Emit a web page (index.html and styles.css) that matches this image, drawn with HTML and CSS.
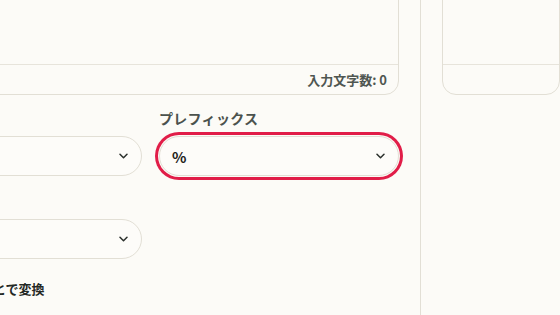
FILE: index.html
```html
<!DOCTYPE html>
<html lang="ja">
<head>
  <meta charset="UTF-8" />
  <meta name="viewport" content="width=device-width, initial-scale=1.0" />
  <title>文字変換</title>
  <link rel="stylesheet" href="styles.css">
</head>
<body>
  <div class="layout">
    <main class="main">
      <div class="text-card">
        <div class="text-area"></div>
        <div class="text-footer">入力文字数: 0</div>
      </div>

      <div class="options">
        <div class="field">
          <label class="field-label"></label>
          <div class="select">
            <span class="select-value"></span>
            <svg class="chevron" width="9" height="6" viewBox="0 0 9 6"><path d="M1 1.2l3.5 3.5 3.5-3.5" fill="none" stroke="#2b302c" stroke-width="1.5" stroke-linecap="round" stroke-linejoin="round"/></svg>
          </div>
        </div>
        <div class="field">
          <label class="field-label">プレフィックス</label>
          <div class="select is-focused">
            <span class="select-value">%</span>
            <svg class="chevron" width="9" height="6" viewBox="0 0 9 6"><path d="M1 1.2l3.5 3.5 3.5-3.5" fill="none" stroke="#2b302c" stroke-width="1.5" stroke-linecap="round" stroke-linejoin="round"/></svg>
          </div>
        </div>
        <div class="field">
          <label class="field-label"></label>
          <div class="select">
            <span class="select-value"></span>
            <svg class="chevron" width="9" height="6" viewBox="0 0 9 6"><path d="M1 1.2l3.5 3.5 3.5-3.5" fill="none" stroke="#2b302c" stroke-width="1.5" stroke-linecap="round" stroke-linejoin="round"/></svg>
          </div>
        </div>
      </div>

      <div class="option-title">英数記号を半角とで変換</div>
    </main>

    <aside class="side">
      <div class="text-card">
        <div class="text-area"></div>
        <div class="text-footer"></div>
      </div>
    </aside>
  </div>
</body>
</html>
```

FILE: styles.css
```css
* {
  box-sizing: border-box;
  font-family: "Noto Sans CJK JP", "Noto Sans", sans-serif;
}

body {
  margin: 0;
  background-color: #fcfbf7;
  color: #232824;
  height: 315px;
  overflow: hidden;
}

/* page is scrolled/cropped: left column starts off screen */
.layout {
  display: flex;
  margin-left: -98px;
  margin-top: -40px;
  min-height: 400px;
}

.main {
  width: 519px;
  flex-shrink: 0;
  padding-right: 21px;
  border-right: 1px solid #e2dfd5;
}

.side {
  flex: 1;
  padding-left: 21px;
}

.text-card {
  border: 1px solid #e2dfd5;
  border-radius: 14px;
  background-color: #fcfbf7;
}

.text-area {
  height: 103px;
}

.text-footer {
  height: 30px;
  border-top: 1px solid #e7e4db;
  padding: 0 11px;
  display: flex;
  align-items: center;
  justify-content: flex-end;
  font-size: 13px;
  font-weight: 700;
  color: #4f5651;
}

.options {
  display: grid;
  grid-template-columns: 1fr 1fr;
  column-gap: 17px;
  row-gap: 15px;
  margin-top: 13px;
}

.field-label {
  display: block;
  height: 20px;
  font-size: 14px;
  line-height: 20px;
  font-weight: 700;
  color: #4b524d;
  letter-spacing: 0.3px;
  margin-bottom: 8px;
}

.select {
  height: 40px;
  border: 1px solid #e2dfd5;
  border-radius: 20px;
  background-color: #fdfcf9;
  display: flex;
  align-items: center;
  justify-content: space-between;
  padding: 0 13px 0 12px;
}

.select.is-focused {
  box-shadow: 0 0 0 1px #fcfbf7, 0 0 0 4px #e11d48;
}

.select-value {
  font-size: 15px;
  font-weight: 600;
  color: #1f2420;
}

.chevron {
  display: block;
  margin-left: auto;
}

.option-title {
  margin-top: 20px;
  font-size: 13px;
  line-height: 20px;
  font-weight: 700;
  color: #232824;
}
```
